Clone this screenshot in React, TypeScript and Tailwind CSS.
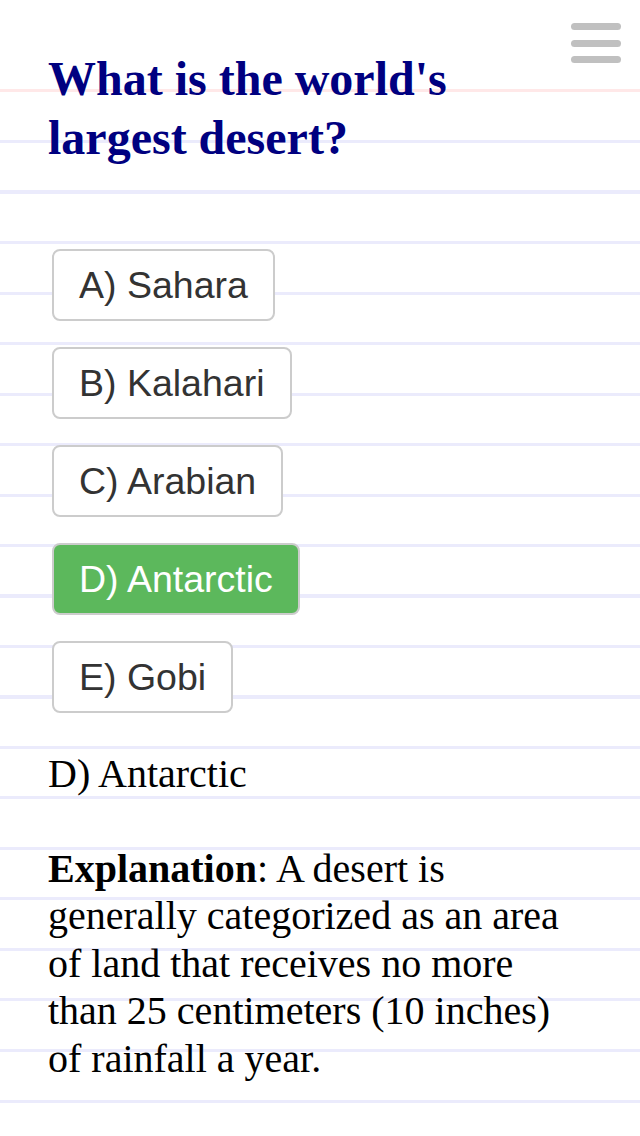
const options = ['A) Sahara', 'B) Kalahari', 'C) Arabian', 'D) Antarctic', 'E) Gobi'];
const correct = 'D) Antarctic';

export default function App() {
  return (
    <div className="relative min-h-[1136px] w-full bg-white bg-[image:linear-gradient(to_bottom,#fff_0px,#fff_88.5px,#ffe8e8_88.5px,#ffe8e8_92.5px,transparent_92.5px),repeating-linear-gradient(to_bottom,#ebebfc_39px,#ebebfc_42px,transparent_42px,transparent_89.5px)] px-12 pt-[49px] font-['Liberation_Serif',serif]">
      {/* menu button */}
      <button className="absolute right-[19px] top-[23px] flex flex-col gap-[9.5px]">
        <span className="block h-[7px] w-[50px] rounded-full bg-[#c0c0c0]" />
        <span className="block h-[7px] w-[50px] rounded-full bg-[#c0c0c0]" />
        <span className="block h-[7px] w-[50px] rounded-full bg-[#c0c0c0]" />
      </button>

      <h1 className="pr-[60px] text-[48px] font-bold leading-[59px] text-[#000080]">
        What is the world's largest desert?
      </h1>

      <div className="ml-1 mt-[82px] flex flex-col items-start gap-[26px]">
        {options.map((opt) => (
          <button
            key={opt}
            className={
              opt === correct
                ? "rounded-[8px] border-2 border-[#cccccc] bg-[#5cb85c] px-[25px] py-[10px] font-['Liberation_Sans',Arial,sans-serif] text-[37.5px] leading-[48px] text-white"
                : "rounded-[8px] border-2 border-[#cccccc] bg-white px-[25px] py-[10px] font-['Liberation_Sans',Arial,sans-serif] text-[37.5px] leading-[48px] text-[#333333]"
            }
          >
            {opt}
          </button>
        ))}
      </div>

      <p className="mt-[37px] text-[40px] leading-[47.5px] text-black">D) Antarctic</p>

      <p className="mt-[47px] pr-[14px] text-[40px] leading-[47.5px] text-black">
        <b>Explanation</b>: A desert is generally categorized as an area of land that receives no more
        than 25 centimeters (10 inches) of rainfall a year.
      </p>
    </div>
  );
}
